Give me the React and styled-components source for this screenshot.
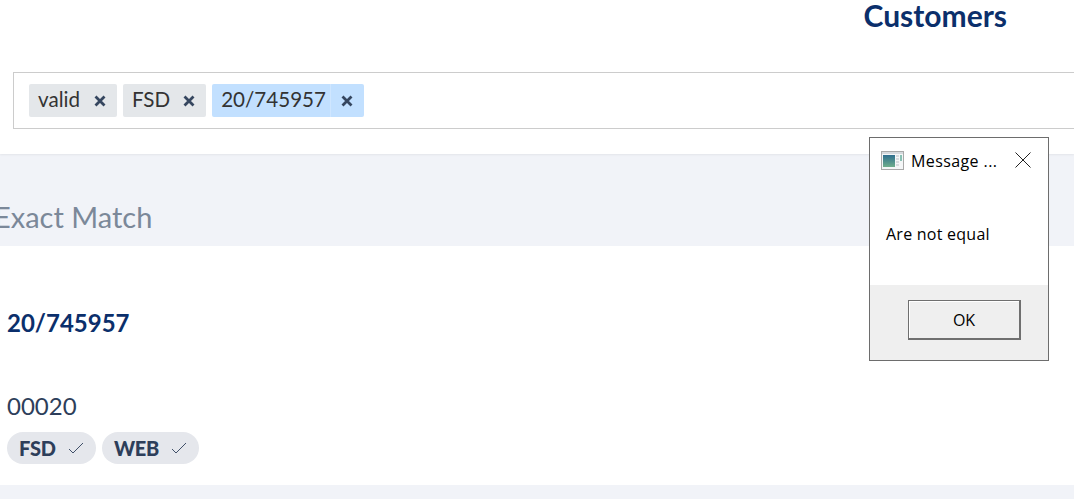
import React from "react";
import styled, { createGlobalStyle } from "styled-components";

const GlobalStyle = createGlobalStyle`
  html, body {
    margin: 0;
    padding: 0;
    background: #ffffff;
    overflow: hidden;
  }
  body {
    font-family: Lato, "Open Sans", sans-serif;
  }
`;

const Page = styled.div`
  position: relative;
  width: 1074px;
  height: 504px;
  overflow: hidden;
`;
const Header = styled.header`
  height: 154px;
  box-sizing: border-box;
  padding: 0 0 0 13px;
  box-shadow: 0 1px 2px rgba(0, 0, 0, 0.06);
  position: relative;
`;
const Title = styled.h1`
  margin: 0;
  height: 72px;
  padding: 0 67px 0 0;
  text-align: right;
  font-size: 30px;
  line-height: 31px;
  font-weight: 700;
  color: #0b2f6b;
`;
const SearchBox = styled.div`
  display: flex;
  align-items: center;
  gap: 6px;
  width: 1100px;
  height: 57px;
  box-sizing: border-box;
  padding-left: 15px;
  border: 1px solid #cccccc;
`;
const Tag = styled.div`
  display: flex;
  align-items: stretch;
  height: 33px;
  box-sizing: border-box;
  border-radius: 2px;
  background: ${(props) => (props.$active ? "#c2e0ff" : "#e4e7ea")};
  color: #333333;
  font-size: 20.6px;
`;
const TagLabel = styled.span`
  display: flex;
  align-items: center;
  padding: 0 ${(props) => (props.$active ? 4 : 0)}px 4px 9px;
  border-right: ${(props) => (props.$active ? "1px solid #cfe6ff" : "none")};
`;
const TagRemove = styled.span`
  display: flex;
  align-items: center;
  padding: 0 ${(props) => props.$right}px 0 ${(props) => props.$left}px;
`;
const TagClose = styled.svg`
  width: 12px;
  height: 12px;
  stroke: #35465f;
  stroke-width: 2.8;
  fill: none;
`;
const Band = styled.section`
  height: 92px;
  box-sizing: border-box;
  padding-top: 45px;
  background: #f1f3f8;
`;
const BandTitle = styled.h2`
  margin: 0 0 0 -6px;
  font-size: 29px;
  line-height: 36px;
  font-weight: 400;
  color: #7b8899;
`;
const Result = styled.section`
  height: 239px;
  box-sizing: border-box;
  padding: 61px 0 0 7px;
`;
const ResultTitle = styled.h3`
  margin: 0;
  font-size: 24px;
  line-height: 32px;
  font-weight: 700;
  color: #0b2f6b;
`;
const Code = styled.div`
  margin-top: 53px;
  font-size: 24px;
  line-height: 28px;
  color: #2d3e5a;
`;
const Chips = styled.div`
  display: flex;
  gap: 6px;
  margin-top: 12px;
`;
const Chip = styled.div`
  display: flex;
  align-items: center;
  height: 32px;
  box-sizing: border-box;
  padding: 0 12px;
  border-radius: 16px;
  background: #e5e7ec;
  color: #2d3e5a;
  font-size: 20px;
  font-weight: 900;
  letter-spacing: -0.2px;
`;
const ChipCheck = styled.svg`
  width: 16px;
  height: 14px;
  margin-left: 12px;
  stroke: #2d3e5a;
  stroke-width: 0.9;
  fill: none;
`;
const FooterBand = styled.div`
  height: 14px;
  background: #f1f3f8;
`;

const Dialog = styled.div`
  position: absolute;
  left: 869px;
  top: 137px;
  width: 180px;
  height: 224px;
  box-sizing: border-box;
  display: flex;
  flex-direction: column;
  border: 1px solid #6d6d6d;
  background: #ffffff;
  font-family: "Open Sans", "DejaVu Sans", sans-serif;
  color: #000000;
`;
const DialogBar = styled.div`
  display: flex;
  align-items: center;
  height: 44px;
  box-sizing: border-box;
  padding: 0 17px 0 11px;
`;
const DialogCaption = styled.span`
  flex: 1;
  margin-left: 7px;
  padding-top: 1px;
  font-size: 16px;
  letter-spacing: 0.4px;
`;
const DialogBody = styled.div`
  flex: 1;
  padding: 42px 0 0 16px;
  font-size: 16px;
  letter-spacing: 0.25px;
  line-height: 20px;
`;
const DialogActions = styled.div`
  display: flex;
  justify-content: flex-end;
  height: 75px;
  box-sizing: border-box;
  padding: 15px 27px 0 0;
  background: #efefef;
`;
const DialogButton = styled.button`
  width: 113px;
  height: 40px;
  box-sizing: border-box;
  padding: 0;
  border: 1px solid #6f6f6f;
  border-right-width: 2px;
  border-bottom-width: 2px;
  border-radius: 0;
  background: #efefef;
  box-shadow: inset 1px 1px 0 #ffffff;
  font-family: "Open Sans", "DejaVu Sans", sans-serif;
  font-size: 16px;
  color: #000000;
`;

const CloseIcon = () => (
  <TagClose viewBox="0 0 12 12">
    <path d="M1.5 1.5l9 9M10.5 1.5l-9 9" />
  </TagClose>
);

const CheckIcon = () => (
  <ChipCheck viewBox="0 0 16 14">
    <path d="M1 8l4 4L15 2" />
  </ChipCheck>
);

const WindowIcon = () => (
  <svg width="23" height="19" viewBox="0 0 23 19">
    <rect x="0.5" y="0.5" width="22" height="18" fill="#f4f6f7" stroke="#a9a9a9" />
    <rect x="1" y="1" width="21" height="2" fill="#d5d9dd" />
    <defs>
      <linearGradient id="pane" x1="0" y1="0" x2="0" y2="1">
        <stop offset="0" stopColor="#2e6e8e" />
        <stop offset="1" stopColor="#6fae8c" />
      </linearGradient>
    </defs>
    <rect x="2" y="4" width="12" height="12" fill="url(#pane)" />
    <path d="M15 5h3M15 8h3M15 11h3M15 14h3" stroke="#b9bfc4" />
    <path d="M20 4v6" stroke="#1f8a70" />
  </svg>
);

const App = () => {
  return (
    <Page>
      <GlobalStyle />
      <Header>
        <Title>Customers</Title>
        <SearchBox>
          <Tag>
            <TagLabel>valid</TagLabel>
            <TagRemove $left={14} $right={11}>
              <CloseIcon />
            </TagRemove>
          </Tag>
          <Tag>
            <TagLabel>FSD</TagLabel>
            <TagRemove $left={13} $right={11}>
              <CloseIcon />
            </TagRemove>
          </Tag>
          <Tag $active>
            <TagLabel $active>20/745957</TagLabel>
            <TagRemove $left={10} $right={11}>
              <CloseIcon />
            </TagRemove>
          </Tag>
        </SearchBox>
      </Header>
      <Band>
        <BandTitle>Exact Match</BandTitle>
      </Band>
      <Result>
        <ResultTitle>20/745957</ResultTitle>
        <Code>00020</Code>
        <Chips>
          <Chip>
            FSD
            <CheckIcon />
          </Chip>
          <Chip>
            WEB
            <CheckIcon />
          </Chip>
        </Chips>
      </Result>
      <FooterBand />
      <Dialog>
        <DialogBar>
          <WindowIcon />
          <DialogCaption>Message ...</DialogCaption>
          <svg width="16" height="16" viewBox="0 0 16 16">
            <path d="M0.5 0.5l15 15M15.5 0.5l-15 15" stroke="#222222" fill="none" />
          </svg>
        </DialogBar>
        <DialogBody>Are not equal</DialogBody>
        <DialogActions>
          <DialogButton>OK</DialogButton>
        </DialogActions>
      </Dialog>
    </Page>
  );
};

export default App;
